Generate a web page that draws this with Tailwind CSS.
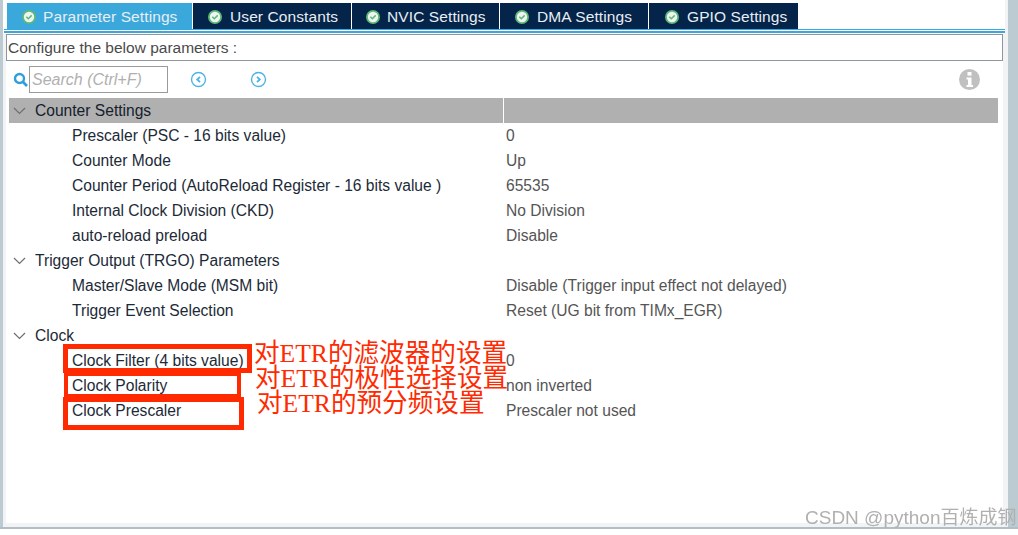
<!DOCTYPE html>
<html lang="en">
<head>
  <meta charset="UTF-8">
  <title>Parameter Settings</title>
  <script src="https://cdn.jsdelivr.net/npm/@tailwindcss/browser@4"></script>
</head>
<body class="bg-white">
  <div class="relative flex h-[535px] w-[1018px] flex-col overflow-hidden font-['Liberation_Sans',sans-serif] text-[15.6px] text-[#1c2a38]">
    <div class="flex min-h-0 flex-1">
      <div class="w-[3px] bg-[#bccad2]"></div>

      <main class="flex w-[1005px] flex-col bg-[#f1f3f5] pb-[4px]">
        <div class="h-[34px] w-[1002px] bg-white pt-[3px]">
          <!-- tabs -->
          <div class="flex h-[26px] gap-px pl-1 text-[15.5px] tracking-[0.1px] text-[#e8eef3]">
            <div class="flex w-[185px] items-center gap-[7px] bg-[#3ba8dc] pl-[15px] pt-px">
              <svg class="size-[14px]" viewBox="0 0 14 14"><circle cx="7" cy="7" r="7" fill="#5cb878"/><circle cx="7" cy="7" r="5.200" fill="#eef5f0"/><path d="M4.300 6.800l2 2 3.400-3.400" fill="none" stroke="#5cb878" stroke-width="1.500"/></svg>
              Parameter Settings
            </div>
            <div class="flex w-[158px] items-center gap-[8px] bg-[#04244a] pl-[15px] pt-px">
              <svg class="size-[14px]" viewBox="0 0 14 14"><circle cx="7" cy="7" r="7" fill="#5cb878"/><circle cx="7" cy="7" r="5.200" fill="#eef5f0"/><path d="M4.300 6.800l2 2 3.400-3.400" fill="none" stroke="#5cb878" stroke-width="1.500"/></svg>
              User Constants
            </div>
            <div class="flex w-[147px] items-center gap-[7px] bg-[#04244a] pl-[14px] pt-px">
              <svg class="size-[14px]" viewBox="0 0 14 14"><circle cx="7" cy="7" r="7" fill="#5cb878"/><circle cx="7" cy="7" r="5.200" fill="#eef5f0"/><path d="M4.300 6.800l2 2 3.400-3.400" fill="none" stroke="#5cb878" stroke-width="1.500"/></svg>
              NVIC Settings
            </div>
            <div class="flex w-[148px] items-center gap-[8px] bg-[#04244a] pl-[15px] pt-px">
              <svg class="size-[14px]" viewBox="0 0 14 14"><circle cx="7" cy="7" r="7" fill="#5cb878"/><circle cx="7" cy="7" r="5.200" fill="#eef5f0"/><path d="M4.300 6.800l2 2 3.400-3.400" fill="none" stroke="#5cb878" stroke-width="1.500"/></svg>
              DMA Settings
            </div>
            <div class="flex w-[149px] items-center gap-[8px] bg-[#04244a] pl-[16px] pt-px">
              <svg class="size-[14px]" viewBox="0 0 14 14"><circle cx="7" cy="7" r="7" fill="#5cb878"/><circle cx="7" cy="7" r="5.200" fill="#eef5f0"/><path d="M4.300 6.800l2 2 3.400-3.400" fill="none" stroke="#5cb878" stroke-width="1.500"/></svg>
              GPIO Settings
            </div>
          </div>
          <div class="ml-px h-px w-[1001px] bg-[#3ba8dc]"></div>
          <div class="mt-px ml-px h-[2px] w-[1001px] bg-[#3ba8dc]"></div>
        </div>

        <div class="ml-[3px] w-[997px] flex-1 bg-white">
          <!-- configure box -->
          <div class="flex h-[27px] items-center border border-[#8f979c] pl-[1px] text-[15.5px] text-[#4a4a4a]">Configure the below parameters :</div>

          <!-- search bar -->
          <div class="mt-[5px] flex h-[27px] items-center pl-[7px]">
            <svg class="size-[15px]" viewBox="0 0 15 15" fill="none" stroke="#2f9fdc"><circle cx="6.500" cy="6.500" r="4.500" stroke-width="2.400"/><path d="M10 10l4 4" stroke-width="2.600"/></svg>
            <div class="ml-px flex h-[27px] w-[139px] items-center border border-[#9a9a9a] pl-[2px] pt-px text-[16px] italic text-[#b0b0b0]">Search (Ctrl+F)</div>
            <svg class="ml-[22px] size-[17px]" viewBox="0 0 17 17" fill="none" stroke="#4db3e6"><circle cx="8.500" cy="8.500" r="7" stroke-width="1.400"/><path d="M10 5.800L7.200 8.500 10 11.200" stroke-width="1.800"/></svg>
            <svg class="ml-[43px] size-[17px]" viewBox="0 0 17 17" fill="none" stroke="#4db3e6"><circle cx="8.500" cy="8.500" r="7" stroke-width="1.400"/><path d="M7 5.800L9.800 8.500 7 11.200" stroke-width="1.800"/></svg>
            <svg class="ml-auto mr-[23px] size-[21px]" viewBox="0 0 21 21"><circle cx="10.500" cy="10.500" r="10.500" fill="#c0c0c0"/><rect x="8.500" y="3" width="4" height="3.600" fill="#fff"/><path d="M7.500 8.500h5v7.500h1.500v2H7.500v-2H9v-5.500H7.500z" fill="#fff"/></svg>
          </div>

          <!-- parameter table -->
          <div class="mt-[5px] ml-[3px] w-[989px] leading-[25px]">
            <div class="grid h-[25px] grid-cols-[495px_1fr] bg-[#b0b0b0]">
              <div class="flex items-center border-r border-white">
                <svg class="ml-[4px] mr-[9px] h-[8px] w-[13px]" viewBox="0 0 13 8" fill="none" stroke="#6f6f6f" stroke-width="1.200"><path d="M1 1l5.500 5.500L12 1"/></svg>
                <span class="text-[#14202c]">Counter Settings</span>
              </div>
              <div></div>
            </div>

            <div class="grid h-[25px] grid-cols-[497px_1fr]"><span class="pl-[63px]">Prescaler (PSC - 16 bits value)</span><span class="text-[#555]">0</span></div>
            <div class="grid h-[25px] grid-cols-[497px_1fr]"><span class="pl-[63px]">Counter Mode</span><span class="text-[#555]">Up</span></div>
            <div class="grid h-[25px] grid-cols-[497px_1fr]"><span class="pl-[63px]">Counter Period (AutoReload Register - 16 bits value )</span><span class="text-[#555]">65535</span></div>
            <div class="grid h-[25px] grid-cols-[497px_1fr]"><span class="pl-[63px]">Internal Clock Division (CKD)</span><span class="text-[#555]">No Division</span></div>
            <div class="grid h-[25px] grid-cols-[497px_1fr]"><span class="pl-[63px]">auto-reload preload</span><span class="text-[#555]">Disable</span></div>

            <div class="flex h-[25px] items-center">
              <svg class="ml-[4px] mr-[9px] h-[8px] w-[13px]" viewBox="0 0 13 8" fill="none" stroke="#6f6f6f" stroke-width="1.200"><path d="M1 1l5.500 5.500L12 1"/></svg>
              <span>Trigger Output (TRGO) Parameters</span>
            </div>
            <div class="grid h-[25px] grid-cols-[497px_1fr]"><span class="pl-[63px]">Master/Slave Mode (MSM bit)</span><span class="text-[#555]">Disable (Trigger input effect not delayed)</span></div>
            <div class="grid h-[25px] grid-cols-[497px_1fr]"><span class="pl-[63px]">Trigger Event Selection</span><span class="text-[#555]">Reset (UG bit from TIMx_EGR)</span></div>

            <div class="flex h-[25px] items-center">
              <svg class="ml-[4px] mr-[9px] h-[8px] w-[13px]" viewBox="0 0 13 8" fill="none" stroke="#6f6f6f" stroke-width="1.200"><path d="M1 1l5.500 5.500L12 1"/></svg>
              <span>Clock</span>
            </div>
            <div class="grid h-[25px] grid-cols-[497px_1fr]"><span class="pl-[63px]">Clock Filter (4 bits value)</span><span class="text-[#555]">0</span></div>
            <div class="grid h-[25px] grid-cols-[497px_1fr]"><span class="pl-[63px]">Clock Polarity</span><span class="text-[#555]">non inverted</span></div>
            <div class="grid h-[25px] grid-cols-[497px_1fr]"><span class="pl-[63px]">Clock Prescaler</span><span class="text-[#555]">Prescaler not used</span></div>
          </div>
        </div>
      </main>

      <div class="w-[10px] bg-[#bccad2]"></div>
    </div>
    <div class="h-[2px] bg-[#b0bec5]"></div>
    <div class="h-[6px] bg-white"></div>

    <!-- red annotations drawn over the screenshot -->
    <div class="absolute left-[63px] top-[344px] h-[29px] w-[189px] border-[5px] border-[#ff2a00]"></div>
    <div class="absolute left-[64px] top-[372px] h-[26px] w-[177px] border-[4px] border-[#ff2a00]"></div>
    <div class="absolute left-[63px] top-[397px] h-[33px] w-[181px] border-[5px] border-[#ff2a00]"></div>
    <div class="absolute left-[254px] top-[338px] font-['Liberation_Serif','Noto_Sans_CJK_SC',serif] text-[25.600px] leading-[32px] whitespace-nowrap text-[#ff2a00]">对ETR的滤波器的设置</div>
    <div class="absolute left-[255px] top-[363px] font-['Liberation_Serif','Noto_Sans_CJK_SC',serif] text-[25.600px] leading-[32px] whitespace-nowrap text-[#ff2a00]">对ETR的极性选择设置</div>
    <div class="absolute left-[257px] top-[388px] font-['Liberation_Serif','Noto_Sans_CJK_SC',serif] text-[25.600px] leading-[32px] whitespace-nowrap text-[#ff2a00]">对ETR的预分频设置</div>

    <!-- watermark -->
    <div class="absolute left-[805px] top-[506px] font-['Liberation_Sans','Noto_Sans_CJK_SC',sans-serif] text-[19px] leading-[24px] whitespace-nowrap text-[#b0b0b0] blur-[0.4px]">CSDN @python百炼成钢</div>
  </div>
</body>
</html>
